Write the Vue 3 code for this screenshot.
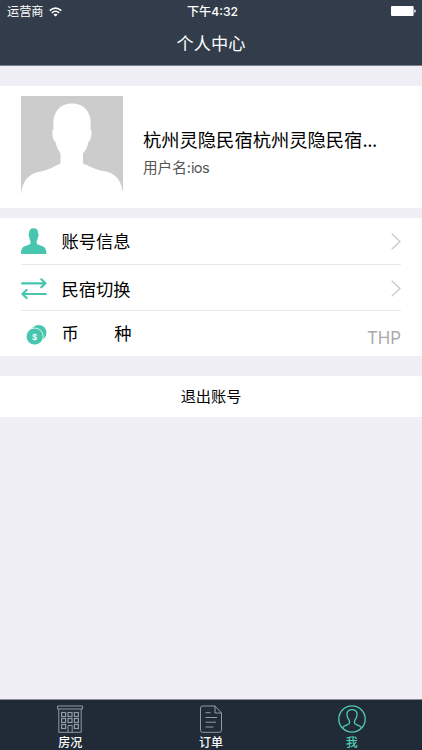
<script setup>
const tabs = [
  { id: 'rooms', label: '房况' },
  { id: 'orders', label: '订单' },
  { id: 'me', label: '我', active: true },
]
const windows = [0, 1, 2].flatMap((r) => [0, 1, 2].map((c) => ({ x: 5.6 + c * 6.4, y: 7.5 + r * 6, r, c }))).filter((w) => !(w.r === 2 && w.c === 1))
</script>

<template>
  <div class="screen">
    <header class="header">
      <div class="status">
        <div class="carrier">
          <span>运营商</span>
          <svg class="wifi" viewBox="0 0 13 10" fill="none" stroke="#fff" stroke-width="1.6">
            <path d="M.7 3.6Q6.5-1.3 12.3 3.6" />
            <path d="M2.8 5.8Q6.5 2.7 10.2 5.8" />
            <path d="M6.5 9.6L4.3 7.5Q6.5 5.8 8.7 7.5Z" fill="#fff" stroke="none" />
          </svg>
        </div>
        <span class="time">下午4:32</span>
        <div class="power">
          <svg class="battery" viewBox="0 0 25 10" fill="#fff">
            <rect width="22.6" height="10" rx="1" />
            <path d="M23.3 3.2q1.5.4 1.5 1.8t-1.5 1.8z" />
          </svg>
        </div>
      </div>
      <h1 class="title">个人中心</h1>
    </header>

    <main class="content">
      <section class="profile">
        <svg class="avatar" viewBox="0 0 102 102">
          <rect width="102" height="102" fill="#ccc" />
          <path fill="#fff" d="M0 102V99C1 85 8 77 20 75.500C27 74 34 70 39.500 67.500V57.500C37 54 35.500 50.500 34.500 46C31.500 44 31 37 31.500 34C32 33 33 33.500 32.500 32C31 16 39 7.500 51 7.500S71.500 16 69.500 33C71.500 35 70.500 44 67.500 46C66.500 50.500 65 54 62 57.500V67.500C68 70 75 74 82 75C93 76.500 100 83 101.500 95H102V102Z" />
        </svg>
        <div class="identity">
          <div class="name">杭州灵隐民宿杭州灵隐民宿<span class="dots">...</span></div>
          <div class="user">用户名:<span class="login">ios</span></div>
        </div>
      </section>

      <section class="list">
        <div class="row account">
          <svg class="icon" viewBox="0 0 26 26" fill="#48c5ae">
            <path d="M8 5.500C8 2 9.700 .2 12.600 .2S17.200 2 17.200 5.500C17.900 6.500 17.700 8.500 16.900 9.200C16.700 11 16.200 12.200 15.700 13V15.700C17 16.900 19.500 17.300 21.800 18.300C24.500 19.600 25.500 22 25.400 26H0C-.100 22 .9 19.600 3.600 18.300C5.900 17.300 8.300 16.900 9.500 15.700V13C8.900 12.200 8.500 11 8.300 9.200C7.500 8.500 7.300 6.500 8 5.500Z" />
          </svg>
          <span class="label">账号信息</span>
          <svg class="chevron" viewBox="0 0 10 17"><path d="M.7.700L9 8.500L.7 16.300" /></svg>
        </div>
        <div class="row switch">
          <svg class="icon" viewBox="0 0 26 26" fill="none" stroke="#48c5ae" stroke-width="2.2" stroke-linecap="round" stroke-linejoin="round">
            <path d="M1 7.300H24.500M20.300 3.300L24.500 7.300L20.300 11.300M24.800 18H1.400M5.600 14L1.400 18L5.600 22" />
          </svg>
          <span class="label">民宿切换</span>
          <svg class="chevron" viewBox="0 0 10 17"><path d="M.7.700L9 8.500L.7 16.300" /></svg>
        </div>
        <div class="row currency">
          <svg class="icon" viewBox="0 0 26 26">
            <circle cx="17.700" cy="11.800" r="7.800" fill="#48c5ae" />
            <circle cx="13.700" cy="15.500" r="8.500" fill="#48c5ae" stroke="#fff" stroke-width=".8" />
            <text x="13.700" y="18.500" text-anchor="middle" class="coin">$</text>
          </svg>
          <span class="label spread"><span>币</span><span>种</span></span>
          <span class="value">THP</span>
        </div>
      </section>

      <button class="logout">退出账号</button>
    </main>

    <nav class="tabs">
      <div v-for="tab in tabs" :key="tab.id" class="tab" :class="{ active: tab.active }">
        <svg v-if="tab.id === 'rooms'" class="tab-icon" viewBox="0 0 28 28">
          <path d="M1.500 1H26.500V4H1.500ZM2.800 4V27.300H25.200V4" />
          <rect v-for="w in windows" :key="w.x + '-' + w.y" :x="w.x" :y="w.y" width="4" height="4" class="window" />
          <path d="M12 27V20.500H16.200V27" />
        </svg>
        <svg v-else-if="tab.id === 'orders'" class="tab-icon" viewBox="0 0 28 28">
          <path d="M18 1H5.500Q3.500 1 3.500 3V25.300Q3.500 27.300 5.500 27.300H22.500Q24.500 27.300 24.500 25.300V8ZM18 1V8H24.500M8.500 7.700H13.500M8.500 12.500H20M8.500 17.200H19M8.500 22H16.500" />
        </svg>
        <svg v-else class="tab-icon" viewBox="0 0 28 28">
          <circle cx="14" cy="14" r="13.200" />
          <path d="M4.500 22.700C5.500 21 7 20.500 9 19.800C11.700 18.900 12 17.800 11.200 15.500C10 13.500 8.700 11.500 8.900 8.900C9.200 6 11.200 4.700 14 4.700S18.800 6 19.100 8.900C19.300 11.500 18 13.500 16.800 15.500C16 17.800 16.300 18.900 19 19.800C21 20.500 22.500 21 23.500 22.700" />
        </svg>
        <span class="tab-label">{{ tab.label }}</span>
      </div>
    </nav>
  </div>
</template>

<style>
body {
  margin: 0;
}
</style>

<style scoped>
.screen {
  display: flex;
  flex-direction: column;
  width: 422px;
  height: 750px;
  overflow: hidden;
  background: #f0eff5;
  color: #000;
  font-family: Inter, "Noto Sans CJK SC", sans-serif;
}
.header {
  box-sizing: border-box;
  height: 66px;
  background: #323c4a;
  border-bottom: 1px solid #7c828e;
  color: #fff;
}
.status {
  display: grid;
  grid-template-columns: 1fr auto 1fr;
  align-items: center;
  height: 22px;
  padding: 0 6px 0 7px;
  font-size: 12.2px;
  line-height: 22px;
}
.carrier {
  display: flex;
  align-items: center;
  gap: 5px;
}
.carrier span,
.time {
  padding-top: 1px;
}
.wifi {
  width: 13px;
  height: 10px;
}
.time {
  padding-left: 2px;
  font-weight: 500;
}
.power {
  display: flex;
  justify-content: flex-end;
  padding-bottom: 1px;
}
.battery {
  width: 25px;
  height: 10px;
}
.title {
  margin: 0;
  font-size: 17.2px;
  font-weight: 400;
  line-height: 43px;
  text-align: center;
}
.content {
  flex: 1;
}
.profile {
  display: flex;
  box-sizing: border-box;
  height: 122px;
  margin-top: 20px;
  padding: 10px 21px;
  background: #fff;
}
.avatar {
  width: 102px;
  height: 102px;
}
.identity {
  margin: 30px 0 0 20px;
}
.name {
  font-size: 18.3px;
  line-height: 28px;
  white-space: nowrap;
}
.dots {
  letter-spacing: -0.4px;
}
.user {
  color: #555;
  font-size: 14.6px;
  line-height: 29px;
}
.login {
  letter-spacing: -0.7px;
}
.list {
  height: 138px;
  margin-top: 10px;
  padding: 0 21px;
  background: #fff;
}
.row {
  display: flex;
  align-items: center;
  box-sizing: border-box;
  height: 46px;
  border-bottom: 1px solid #e9e9ed;
}
.account {
  height: 47px;
}
.switch {
  padding-top: 2px;
}
.currency {
  height: 45px;
  border-bottom: 0;
}
.icon {
  width: 26px;
  height: 26px;
}
.label {
  width: 70px;
  margin-left: 14.5px;
  padding-top: 1px;
  font-size: 17.3px;
  line-height: 30px;
}
.switch .label {
  padding-top: 2px;
}
.spread {
  display: flex;
  justify-content: space-between;
  padding-top: 0;
}
.coin {
  fill: #fff;
  font-size: 8px;
  font-weight: 600;
}
.chevron {
  width: 10px;
  height: 17px;
  margin-left: auto;
  fill: none;
  stroke: #c7c7cc;
  stroke-width: 1.2;
}
.value {
  margin: 9px 0 0 auto;
  color: #aaa;
  font-size: 16.8px;
}
.logout {
  display: block;
  width: 100%;
  height: 41px;
  margin-top: 20px;
  padding: 0 0 3px;
  border: 0;
  background: #fff;
  color: #000;
  font-family: inherit;
  font-size: 15.2px;
}
.tabs {
  display: grid;
  grid-template-columns: repeat(3, 1fr);
  box-sizing: border-box;
  height: 51px;
  border-top: 1px solid #8b8f97;
  background: #212b37;
}
.tab {
  display: flex;
  flex-direction: column;
  align-items: center;
  padding-top: 5px;
  color: #fff;
}
.tab-icon {
  flex: none;
  width: 28px;
  height: 28px;
  fill: none;
  stroke: #929aa3;
  stroke-width: 1;
}
.window {
  stroke-width: 1.2;
}
.tab-label {
  margin-top: 1px;
  font-size: 12px;
  font-weight: 500;
  line-height: 17px;
}
.active {
  color: #50d0b4;
}
.active .tab-icon {
  stroke: #50d0b4;
  stroke-width: 1.3;
}
</style>
